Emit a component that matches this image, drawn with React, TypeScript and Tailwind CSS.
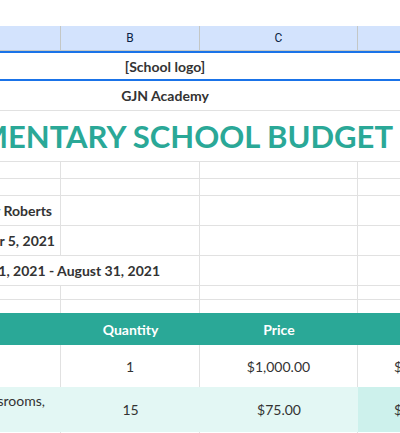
const cols = "grid grid-cols-[61px_139px_158px_1fr]";

const GridRow = ({ h, hideFirst = false }: { h: string; hideFirst?: boolean }) => (
  <div className={`${cols} ${h} border-b border-[#e1e1e1]`}>
    <div className={hideFirst ? "" : "border-r border-[#e1e1e1]"} />
    <div className="border-r border-[#e1e1e1]" />
    <div className="border-r border-[#e1e1e1]" />
    <div />
  </div>
);

const InfoRow = ({ text, end, span = 1 }: { text: string; end: string; span?: number }) => (
  <div className={`${cols} h-[30px] border-b border-[#e1e1e1]`}>
    {span === 1 ? (
      <>
        <div className="flex items-center justify-end border-r border-[#e1e1e1]">
          <span className={`whitespace-nowrap font-bold text-[14px] text-[#333333] ${end}`}>{text}</span>
        </div>
        <div className="border-r border-[#e1e1e1]" />
      </>
    ) : (
      <div className="col-span-2 flex items-center justify-end border-r border-[#e1e1e1]">
        <span className={`whitespace-nowrap font-bold text-[14px] text-[#333333] ${end}`}>{text}</span>
      </div>
    )}
    <div className="border-r border-[#e1e1e1]" />
    <div />
  </div>
);

export default function App() {
  return (
    <div
      className="w-[400px] h-[433px] overflow-hidden bg-white"
      style={{ fontFamily: "Lato, 'Open Sans', sans-serif" }}
    >
      <div className="h-[26px]" />

      {/* column letters */}
      <div
        className={`${cols} h-[25px] bg-[#d3e3fd] border-b border-[#c4c7c5] text-[12px] text-[#0b1f45]`}
        style={{ fontFamily: "Roboto, sans-serif" }}
      >
        <div className="border-r border-[#c4c7c5]" />
        <div className="flex items-center justify-center border-r border-[#c4c7c5]">B</div>
        <div className="flex items-center justify-center border-r border-[#c4c7c5]">C</div>
        <div />
      </div>

      {/* selected row: logo */}
      <div className="h-[30px] border-y-2 border-[#1a73e8] flex items-center">
        <div className="w-[330px] flex justify-center">
          <span className="font-bold text-[14px] text-[#333333]">[School logo]</span>
        </div>
      </div>

      <div className="h-[30px] border-b border-[#e1e1e1] flex items-center">
        <div className="w-[330px] flex justify-center">
          <span className="font-bold text-[14px] text-[#333333]">GJN Academy</span>
        </div>
      </div>

      {/* title */}
      <div className="h-[51px] border-b border-[#e1e1e1] flex items-center justify-end pr-[7px]">
        <span className="whitespace-nowrap font-bold text-[31px] text-[#2aa897]">
          ELEMENTARY SCHOOL BUDGET
        </span>
      </div>

      <GridRow h="h-[17px]" />
      <GridRow h="h-[17px]" />

      <InfoRow text="Principal: Mary Roberts" end="mr-[8px]" />
      <InfoRow text="Date: October 5, 2021" end="mr-[5px]" />
      <InfoRow text="Budget period: September 1, 2021 - August 31, 2021" end="mr-[39px]" span={2} />

      <GridRow h="h-[14px]" />
      <div className={`${cols} h-[13px]`}>
        <div className="border-r border-[#e1e1e1]" />
        <div className="border-r border-[#e1e1e1]" />
        <div className="border-r border-[#e1e1e1]" />
        <div />
      </div>

      {/* table header */}
      <div className={`${cols} h-[32px] bg-[#2aa897] text-white font-bold text-[14px]`}>
        <div className="flex items-center justify-end whitespace-nowrap">
          <span className="mr-[90px]">Item</span>
        </div>
        <div className="flex items-center justify-center">Quantity</div>
        <div className="flex items-center justify-center">Price</div>
        <div className="flex items-center pl-[50px]">Total</div>
      </div>

      {/* data rows */}
      <div className={`${cols} h-[42px] text-[14px] text-[#333333]`}>
        <div className="border-r border-[#e1e1e1]" />
        <div className="flex items-center justify-center border-r border-[#e1e1e1]">1</div>
        <div className="flex items-center justify-center border-r border-[#e1e1e1]">$1,000.00</div>
        <div className="flex items-center pl-[36px] whitespace-nowrap">$1,000.00</div>
      </div>

      <div className={`${cols} h-[45px] text-[14px] text-[#333333] bg-[#e3f7f4]`}>
        <div className="flex flex-col items-end justify-center leading-[17px] pb-[2px]">
          <span className="whitespace-nowrap mr-[16px]">Supplies for classrooms,</span>
          <span className="whitespace-nowrap mr-[80px]">library</span>
        </div>
        <div className="flex items-center justify-center">15</div>
        <div className="flex items-center justify-center">$75.00</div>
        <div className="flex items-center pl-[36px] whitespace-nowrap bg-[#cdf1ec]">$1,125.00</div>
      </div>

      <GridRow h="h-[30px]" />
    </div>
  );
}
